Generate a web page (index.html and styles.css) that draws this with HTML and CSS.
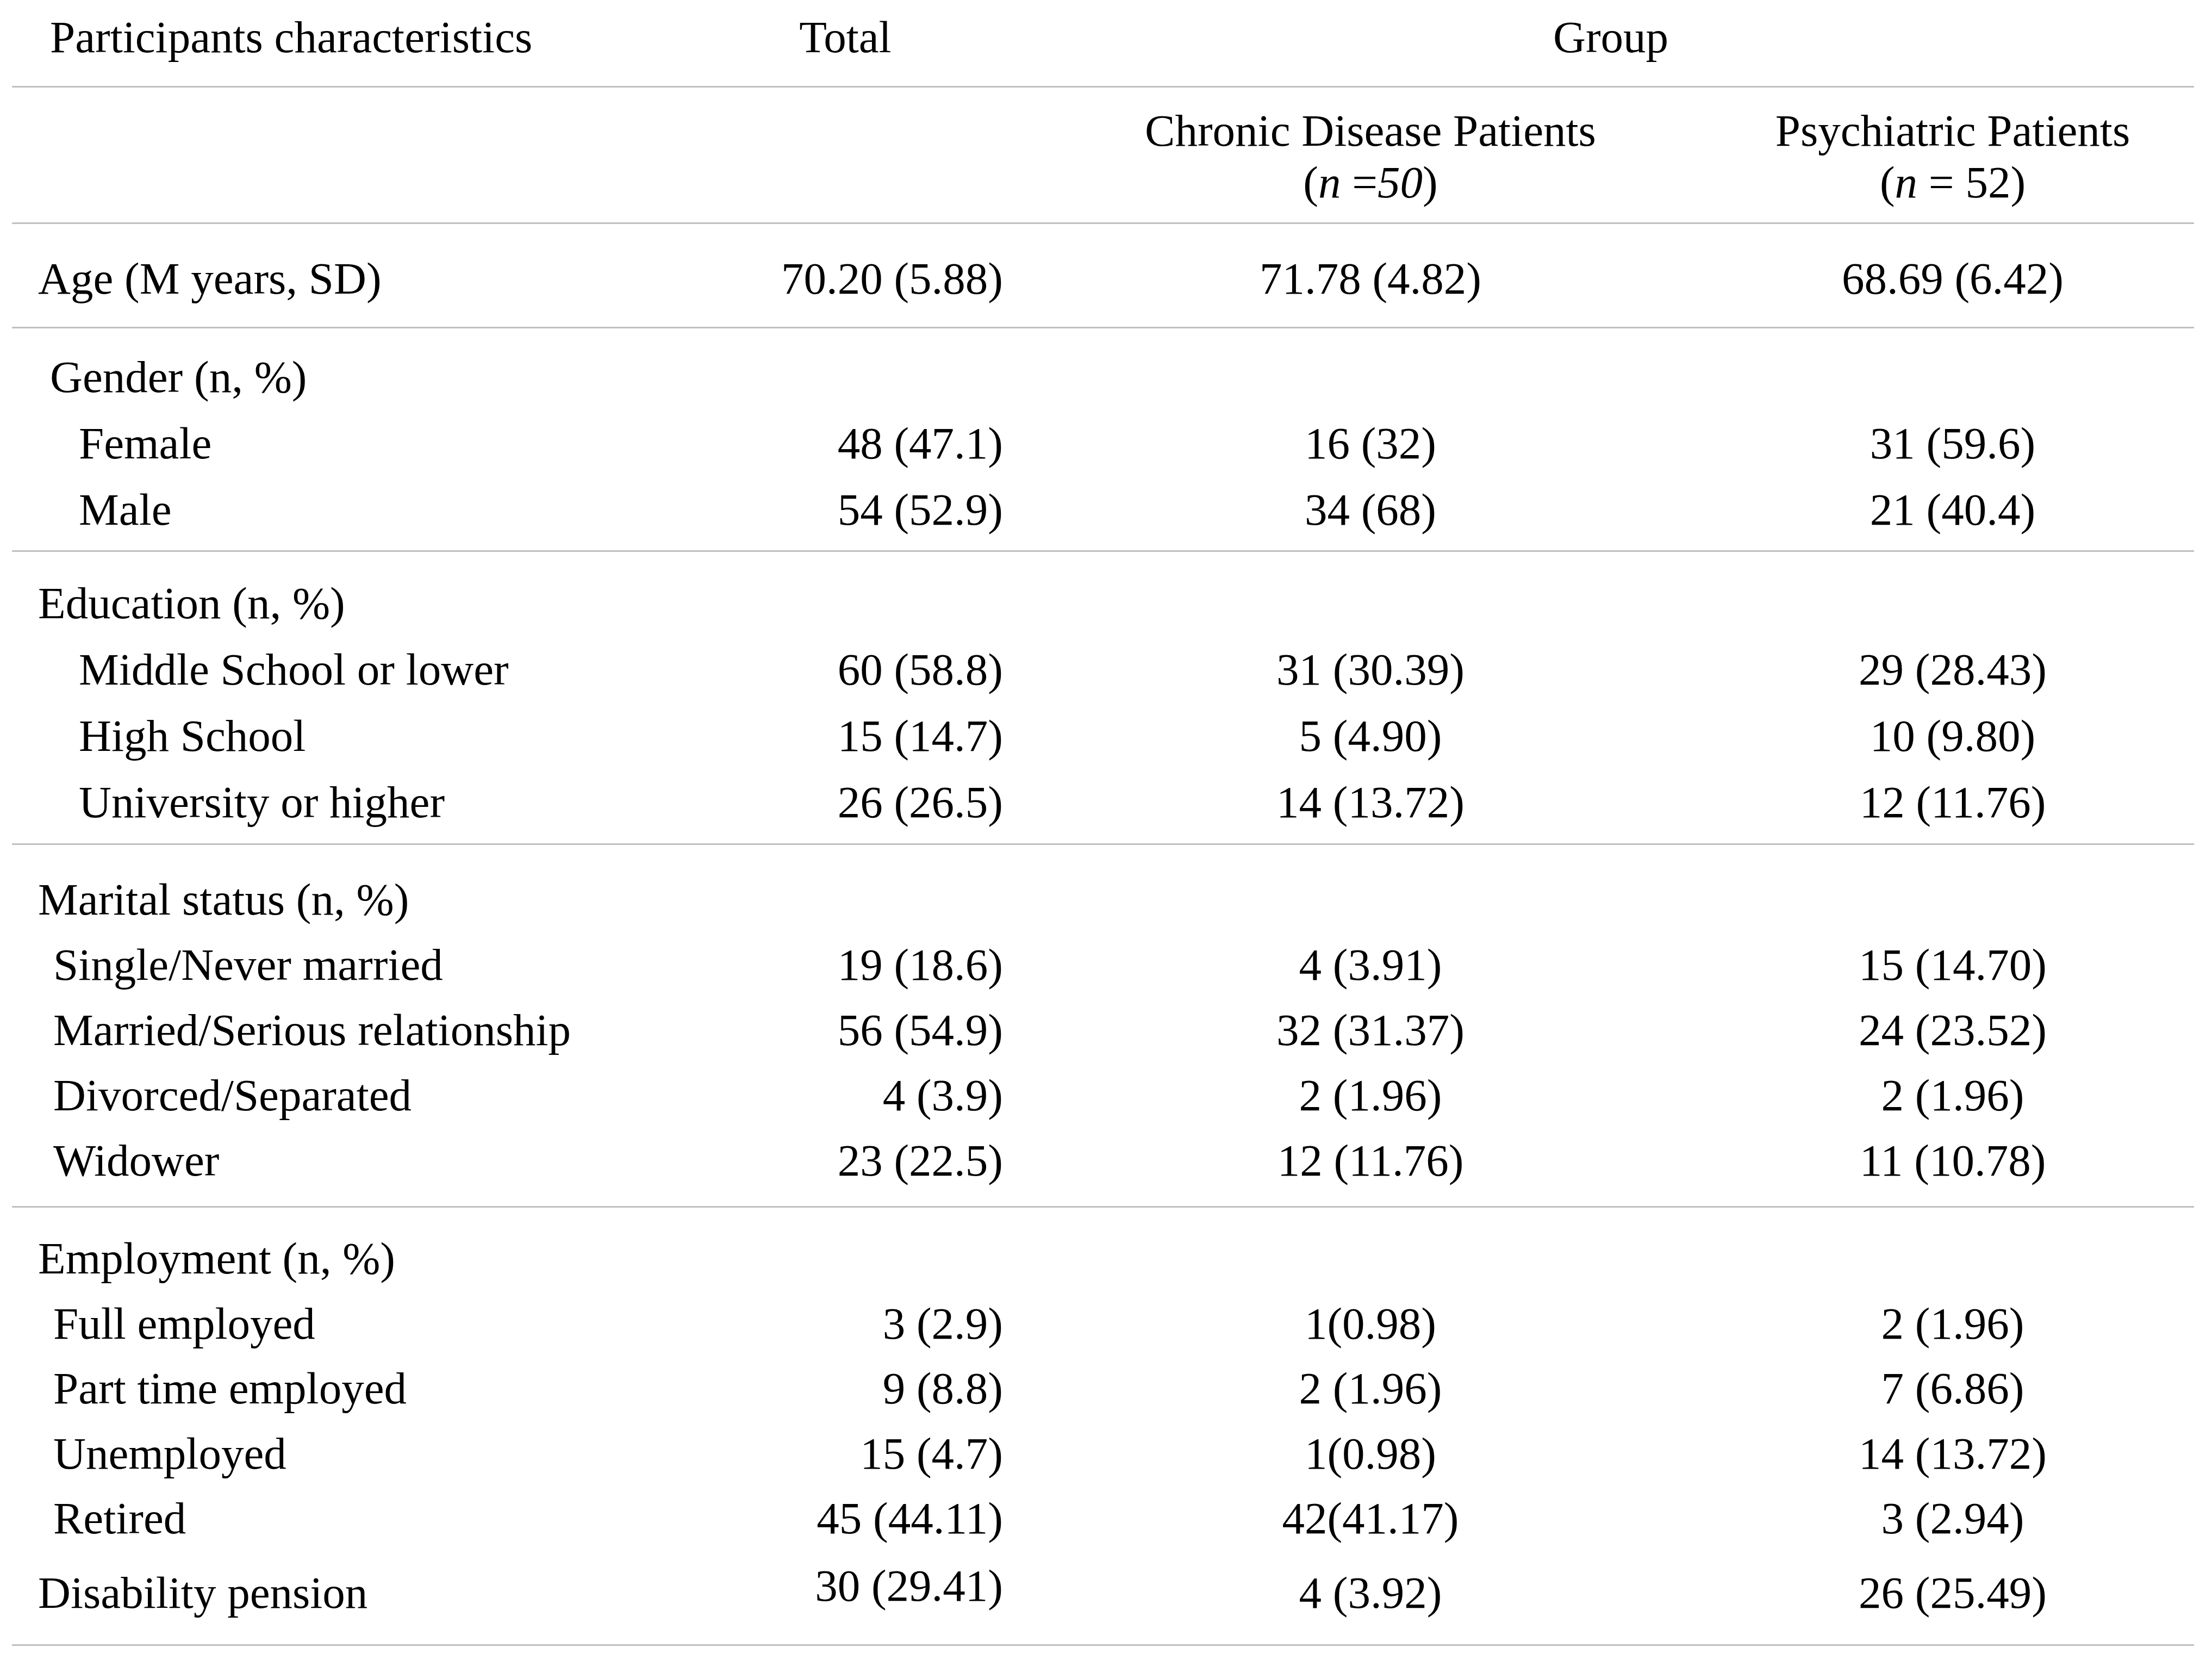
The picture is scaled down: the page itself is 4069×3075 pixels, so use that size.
FILE: index.html
```html
<!DOCTYPE html>
<html lang="en">
<head>
<meta charset="utf-8">
<title>Participants characteristics</title>
<link rel="stylesheet" href="styles.css">
</head>
<body>
<div class="table">
  <div class="head">
    <div class="row">
      <div class="lbl lg">Participants characteristics</div>
      <div class="total-head">Total</div>
      <div class="group-head">Group</div>
    </div>
  </div>

  <div class="section sub">
    <div class="row sub-row">
      <div></div>
      <div></div>
      <div class="ctr">Chronic Disease Patients<br>(<i>n</i> =<i>50</i>)</div>
      <div class="ctr">Psychiatric Patients<br>(<i>n</i> = 52)</div>
    </div>
  </div>

  <div class="section age">
    <div class="row">
      <div class="lbl l0">Age (M years, SD)</div>
      <div class="tot">70.20 (5.88)</div>
      <div class="ctr">71.78 (4.82)</div>
      <div class="ctr">68.69 (6.42)</div>
    </div>
  </div>

  <div class="section gender">
    <div class="row r122"><div class="lbl lg">Gender (n, %)</div><div></div><div></div><div></div></div>
    <div class="row r122"><div class="lbl l2">Female</div><div class="tot">48 (47.1)</div><div class="ctr">16 (32)</div><div class="ctr">31 (59.6)</div></div>
    <div class="row r122"><div class="lbl l2">Male</div><div class="tot">54 (52.9)</div><div class="ctr">34 (68)</div><div class="ctr">21 (40.4)</div></div>
  </div>

  <div class="section education">
    <div class="row r122"><div class="lbl l0">Education (n, %)</div><div></div><div></div><div></div></div>
    <div class="row r122"><div class="lbl l2">Middle School or lower</div><div class="tot">60 (58.8)</div><div class="ctr">31 (30.39)</div><div class="ctr">29 (28.43)</div></div>
    <div class="row r122"><div class="lbl l2">High School</div><div class="tot">15 (14.7)</div><div class="ctr">5 (4.90)</div><div class="ctr">10 (9.80)</div></div>
    <div class="row r122"><div class="lbl l2">University or higher</div><div class="tot">26 (26.5)</div><div class="ctr">14 (13.72)</div><div class="ctr">12 (11.76)</div></div>
  </div>

  <div class="section marital">
    <div class="row r120"><div class="lbl l0">Marital status (n, %)</div><div></div><div></div><div></div></div>
    <div class="row r120"><div class="lbl l1">Single/Never married</div><div class="tot">19 (18.6)</div><div class="ctr">4 (3.91)</div><div class="ctr">15 (14.70)</div></div>
    <div class="row r120"><div class="lbl l1">Married/Serious relationship</div><div class="tot">56 (54.9)</div><div class="ctr">32 (31.37)</div><div class="ctr">24 (23.52)</div></div>
    <div class="row r120"><div class="lbl l1">Divorced/Separated</div><div class="tot">4 (3.9)</div><div class="ctr">2 (1.96)</div><div class="ctr">2 (1.96)</div></div>
    <div class="row r120"><div class="lbl l1">Widower</div><div class="tot">23 (22.5)</div><div class="ctr">12 (11.76)</div><div class="ctr">11 (10.78)</div></div>
  </div>

  <div class="section employment">
    <div class="row r119"><div class="lbl l0">Employment (n, %)</div><div></div><div></div><div></div></div>
    <div class="row r119"><div class="lbl l1">Full employed</div><div class="tot">3 (2.9)</div><div class="ctr">1(0.98)</div><div class="ctr">2 (1.96)</div></div>
    <div class="row r119"><div class="lbl l1">Part time employed</div><div class="tot">9 (8.8)</div><div class="ctr">2 (1.96)</div><div class="ctr">7 (6.86)</div></div>
    <div class="row r119"><div class="lbl l1">Unemployed</div><div class="tot">15 (4.7)</div><div class="ctr">1(0.98)</div><div class="ctr">14 (13.72)</div></div>
    <div class="row r119"><div class="lbl l1">Retired</div><div class="tot">45 (44.11)</div><div class="ctr">42(41.17)</div><div class="ctr">3 (2.94)</div></div>
    <div class="row r119 last-row"><div class="lbl l0">Disability pension</div><div class="tot raise">30 (29.41)</div><div class="ctr">4 (3.92)</div><div class="ctr">26 (25.49)</div></div>
  </div>
</div>
</body>
</html>
```

FILE: styles.css
```css
html, body {
  margin: 0;
  padding: 0;
  background: #ffffff;
}

body {
  font-family: "Liberation Serif", "Times New Roman", serif;
  color: #000000;
  width: 4069px;
  height: 3075px;
  overflow: hidden;
}

.table {
  margin-left: 22px;
  width: 4014px;
  padding-top: 8px;
  font-size: 83px;
}

.row {
  display: grid;
  grid-template-columns: 1218px 630px 1302px 840px;
  line-height: 121px;
  white-space: nowrap;
}

.head {
  padding-bottom: 29px;
}

.section {
  border-top: 3px solid #c0c0c0;
}

.total-head {
  text-align: center;
}

.group-head {
  grid-column: 3 / 5;
  text-align: center;
  padding-left: 44px;
}

.lbl {
  text-align: left;
}

.l0 { padding-left: 48px; }
.lg { padding-left: 70px; }
.l1 { padding-left: 76px; }
.l2 { padding-left: 123px; }

.tot {
  text-align: right;
  padding-right: 25px;
}

.ctr {
  text-align: center;
}

.sub {
  padding-top: 31.5px;
  padding-bottom: 26px;
}

.sub-row {
  line-height: 95px;
}

.age {
  padding-top: 40px;
  padding-bottom: 28px;
}

.gender {
  padding-top: 28.5px;
  padding-bottom: 13.5px;
}

.education {
  padding-top: 33.5px;
  padding-bottom: 14.5px;
}

.marital {
  padding-top: 40.5px;
  padding-bottom: 23.5px;
}

.employment {
  padding-top: 34.7px;
  padding-bottom: 34.8px;
  border-bottom: 3px solid #c0c0c0;
}

.r122 { line-height: 122px; }
.r120 { line-height: 120px; }
.r119 { line-height: 119.5px; }

.last-row {
  margin-top: 17.5px;
}

.raise {
  margin-top: -13px;
}
```
